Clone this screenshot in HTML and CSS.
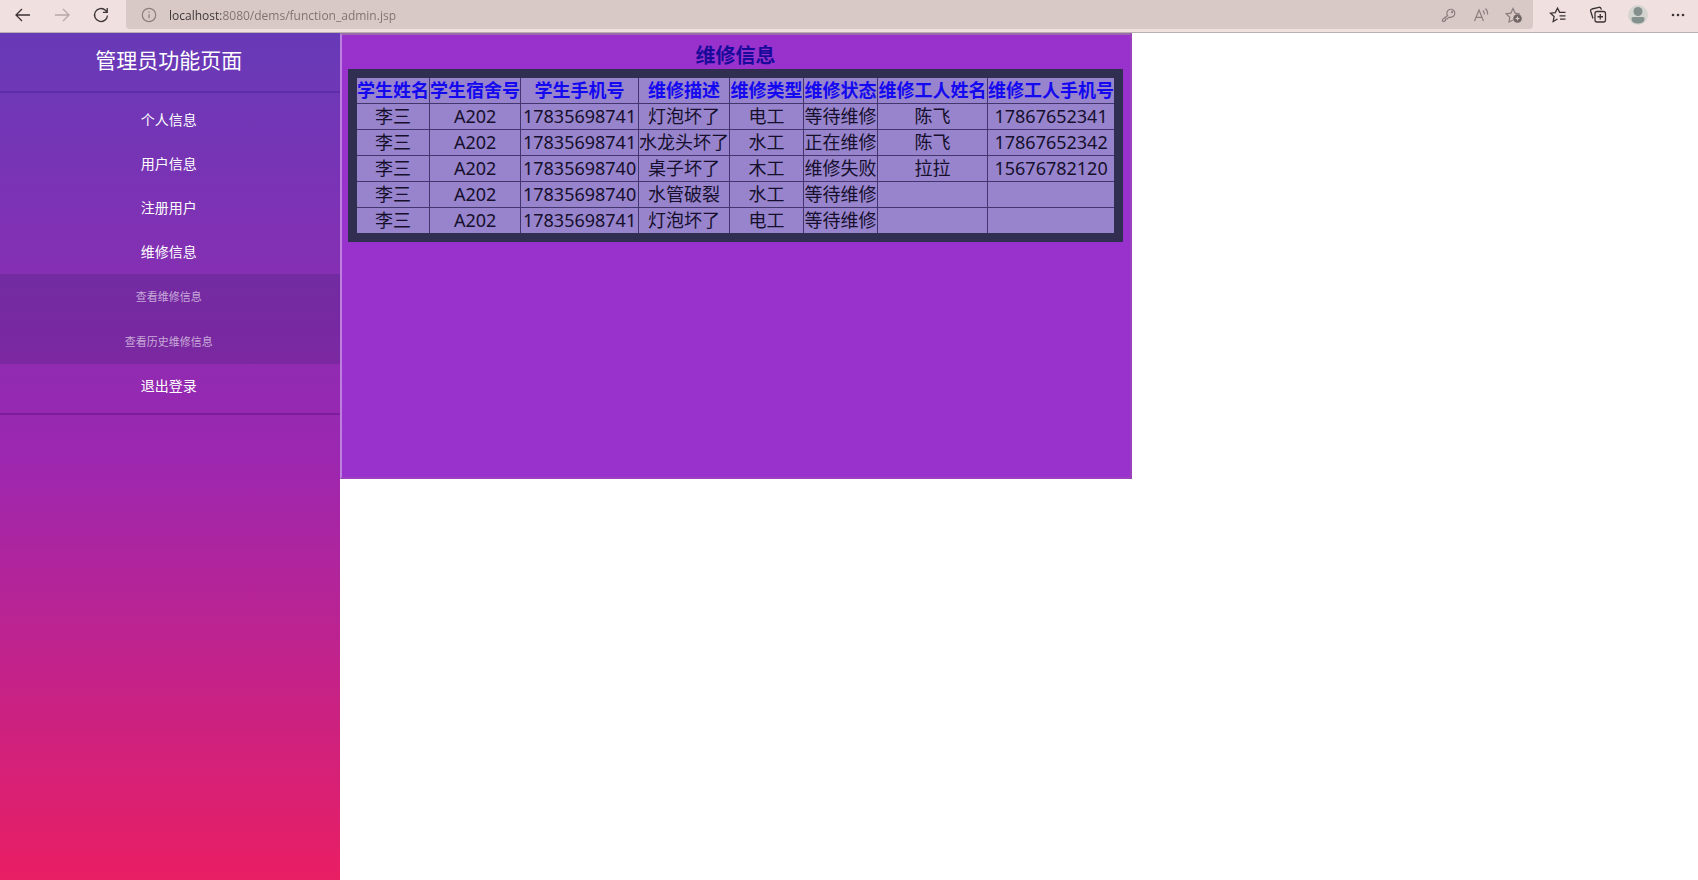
FILE: index.html
```html
<!DOCTYPE html>
<html lang="zh-CN">
<head>
    <meta charset="utf-8">
    <meta name="viewport" content="width=device-width, initial-scale=1">
    <title>管理员功能页面</title>
    <link rel="stylesheet" href="styles.css">
</head>
<body>
    <header class="toolbar">
        <div class="nav-buttons">
            <button type="button" aria-label="Back">
                <svg width="18" height="18" viewBox="0 0 18 18"><path d="M16 9H2.5M8 3L2 9l6 6"/></svg>
            </button>
            <button type="button" class="disabled" aria-label="Forward" disabled>
                <svg width="18" height="18" viewBox="0 0 18 18"><path d="M2 9h13.500M10 3l6 6-6 6"/></svg>
            </button>
            <button type="button" aria-label="Refresh">
                <svg width="18" height="18" viewBox="0 0 18 18"><path d="M15.500 9.500a6.500 6.500 0 1 1-2-5.200L15 6M15.200 2v4.300h-4.300"/></svg>
            </button>
        </div>
        <div class="address">
            <svg width="16" height="16" viewBox="0 0 16 16"><circle cx="8" cy="8" r="6.700"/><path d="M8 7.300v4M8 4.500v1.200"/></svg>
            <input class="url" type="text" aria-label="Address" value="localhost:8080/dems/function_admin.jsp">
            <div class="address-icons">
                <button type="button" aria-label="Password">
                    <svg width="16" height="16" viewBox="0 0 16 16"><path d="M6.500 8.500A4 4 0 1 1 9 10.200L7.500 10.500 6 12H4.500v1.500L3 14.500 1.500 14v-1.500z"/><circle cx="11" cy="5.200" r=".5"/></svg>
                </button>
                <button type="button" aria-label="Read aloud">
                    <svg width="16" height="16" viewBox="0 0 16 16"><path d="M1.500 14L6 3l4.500 11M3 10.300h6M10 3.500q1.500 1.500 1.300 4M12.500 1.500q2.500 2.500 2 6"/></svg>
                </button>
                <button type="button" aria-label="Add to favorites">
                    <svg width="18" height="18" viewBox="0 0 18 18"><path d="M8 14l-4 2 .8-4.700L1.200 7.800l4.700-.7L8 2.500l2.100 4.600 4.700.7"/><circle class="filled" cx="12.500" cy="12.500" r="4.300"/><path class="plus" d="M12.500 10.500v4M10.500 12.500h4"/></svg>
                </button>
            </div>
        </div>
        <div class="browser-icons">
            <button type="button" aria-label="Favorites">
                <svg width="18" height="18" viewBox="0 0 18 18"><path d="M8.500 13l-4.300 2.500.9-4.900-3.600-3.400 4.800-.6 2.200-4.400 2.200 4.200h5.800M10.500 9.800h6M11 13.200h5.500"/></svg>
            </button>
            <button type="button" aria-label="Collections">
                <svg width="18" height="18" viewBox="0 0 18 18"><rect x="6" y="5.500" width="10.500" height="10.500" rx="2"/><path d="M11.250 8v5.500M8.500 10.750H14M4 12.500L1.700 5.200q-.5-1.700 1.200-2.200l7-1.700q1.700-.3 2.200 1.400l.3.900"/></svg>
            </button>
            <button type="button" aria-label="Profile">
                <svg class="avatar" width="20" height="20" viewBox="0 0 20 20"><circle class="avatar-bg" cx="10" cy="10" r="10"/><circle cx="10" cy="6.500" r="4.500"/><path d="M3.500 13.500q0-1.500 1.500-1.500h10q1.500 0 1.500 1.500 0 5-6.500 5t-6.500-5z"/></svg>
            </button>
            <button type="button" aria-label="Settings and more">
                <svg class="dots" width="18" height="18" viewBox="0 0 18 18"><circle cx="4" cy="9" r="1.300"/><circle cx="9" cy="9" r="1.300"/><circle cx="14" cy="9" r="1.300"/></svg>
            </button>
        </div>
    </header>

    <div class="page">
        <nav class="sidebar">
            <h1>管理员功能页面</h1>
            <ul class="menu">
                <li><a href="#">个人信息</a></li>
                <li><a href="#">用户信息</a></li>
                <li><a href="#">注册用户</a></li>
                <li>
                    <a href="#">维修信息</a>
                    <ul class="submenu">
                        <li><a href="#">查看维修信息</a></li>
                        <li><a href="#">查看历史维修信息</a></li>
                    </ul>
                </li>
                <li><a href="#">退出登录</a></li>
            </ul>
        </nav>

        <main class="content">
            <section class="panel">
                <table class="repairs">
                    <caption>维修信息</caption>
                    <colgroup>
                        <col class="col-short">
                        <col class="col-medium">
                        <col class="col-phone">
                        <col class="col-medium">
                        <col class="col-short">
                        <col class="col-short">
                        <col class="col-worker">
                        <col class="col-worker-phone">
                    </colgroup>
                    <thead>
                        <tr>
                            <th>学生姓名</th>
                            <th>学生宿舍号</th>
                            <th>学生手机号</th>
                            <th>维修描述</th>
                            <th>维修类型</th>
                            <th>维修状态</th>
                            <th>维修工人姓名</th>
                            <th>维修工人手机号</th>
                        </tr>
                    </thead>
                    <tbody>
                        <tr><td>李三</td><td>A202</td><td>17835698741</td><td>灯泡坏了</td><td>电工</td><td>等待维修</td><td>陈飞</td><td>17867652341</td></tr>
                        <tr><td>李三</td><td>A202</td><td>17835698741</td><td>水龙头坏了</td><td>水工</td><td>正在维修</td><td>陈飞</td><td>17867652342</td></tr>
                        <tr><td>李三</td><td>A202</td><td>17835698740</td><td>桌子坏了</td><td>木工</td><td>维修失败</td><td>拉拉</td><td>15676782120</td></tr>
                        <tr><td>李三</td><td>A202</td><td>17835698740</td><td>水管破裂</td><td>水工</td><td>等待维修</td><td></td><td></td></tr>
                        <tr><td>李三</td><td>A202</td><td>17835698741</td><td>灯泡坏了</td><td>电工</td><td>等待维修</td><td></td><td></td></tr>
                    </tbody>
                </table>
            </section>
        </main>
    </div>
</body>
</html>
```
FILE: styles.css
```css
* {
    box-sizing: border-box;
}

body {
    margin: 0;
    min-height: 100vh;
    display: flex;
    flex-direction: column;
    background: #fff;
    font-family: "Noto Sans", "Noto Sans CJK SC", sans-serif;
}

ul {
    list-style: none;
    margin: 0;
    padding: 0;
}

a {
    color: inherit;
    text-decoration: none;
}

/* browser toolbar */
.toolbar {
    display: flex;
    height: 33px;
    padding-bottom: 3px;
    background: #f0e1e0;
    border-bottom: 1px solid #b9afb0;
}

.toolbar button {
    display: flex;
    align-items: center;
    justify-content: center;
    padding: 0;
    border: 0;
    background: none;
}

.toolbar svg {
    display: block;
    flex: none;
    fill: none;
    stroke: #3b3334;
    stroke-width: 1.3;
}

.nav-buttons {
    display: flex;
    width: 126px;
    padding-left: 3px;
}

.nav-buttons button {
    width: 39px;
}

.toolbar .disabled svg {
    stroke: #b5a8a8;
}

.address {
    flex: 1;
    display: flex;
    align-items: center;
    gap: 12px;
    padding: 0 10px 0 15px;
    background: #d8c9c7;
    border-radius: 0 0 4px 4px;
}

.address svg {
    stroke: #8a7e7e;
    stroke-width: 1.2;
}

.url {
    flex: 1;
    min-width: 0;
    padding: 2px 0 0;
    border: 0;
    outline: 0;
    font-family: "Open Sans", sans-serif;
    font-size: 12px;
    /* host darker than the path */
    color: transparent;
    background: linear-gradient(90deg, #3b3334 52px, #7c7070 52px);
    background-clip: text;
    -webkit-background-clip: text;
}

.address-icons {
    display: flex;
    gap: 16px;
}

.address .filled {
    fill: #6f6464;
    stroke: none;
}

.address .plus {
    stroke: #d8c9c7;
}

.browser-icons {
    display: flex;
    width: 165px;
    padding-left: 5px;
}

.browser-icons button {
    width: 40px;
}

.toolbar .avatar,
.toolbar .dots {
    fill: #3b3334;
    stroke: none;
}

.toolbar .avatar {
    fill: #83908d;
}

.avatar .avatar-bg {
    fill: #d5d4d0;
}

/* page */
.page {
    flex: 1;
    display: flex;
}

.sidebar {
    width: 20%;
    color: #fff;
    text-align: center;
    background: linear-gradient(#673ab7, #9c27b0 50%, #e91e63);
}

.sidebar h1 {
    margin: 0;
    padding: 0 2px 4px 0;
    font-size: 21px;
    font-weight: 400;
    line-height: 54px;
    border-bottom: 2px solid rgba(60, 20, 130, 0.3);
}

.menu {
    padding: 5px 0;
    font-size: 14px;
    border-bottom: 2px solid rgba(90, 10, 130, 0.4);
}

.menu a {
    display: block;
    padding-right: 2px;
    line-height: 44px;
}

.submenu {
    background: rgba(60, 30, 110, 0.25);
    color: rgba(255, 255, 255, 0.6);
    font-size: 11px;
}

.submenu a {
    line-height: 45px;
}

.content {
    flex: 1;
}

.panel {
    width: 58.3%;
    min-width: 792px;
    min-height: 446px;
    padding: 8px 6px;
    background: #9932cc;
    border: 2px solid #9a42bd;
    border-top-color: #9b6aa8;
    border-left-color: #bd7fe0;
}

.repairs {
    margin: 0 auto;
    border: 9px solid #302f52;
    border-collapse: collapse;
    background: #9784cc;
    color: #160f2c;
    font-size: 18px;
    line-height: 25px;
    text-align: center;
}

.repairs caption {
    color: #1a0a9c;
    font-size: 20px;
    font-weight: 700;
    line-height: 26px;
}

.repairs th,
.repairs td {
    height: 26px;
    padding: 0;
    border: 1px solid #43366f;
    white-space: nowrap;
}

.repairs th {
    color: #1408f0;
}

.col-short {
    width: 74px;
}

.col-medium {
    width: 91px;
}

.col-phone {
    width: 118px;
}

.col-worker {
    width: 110px;
}

.col-worker-phone {
    width: 127px;
}
```
